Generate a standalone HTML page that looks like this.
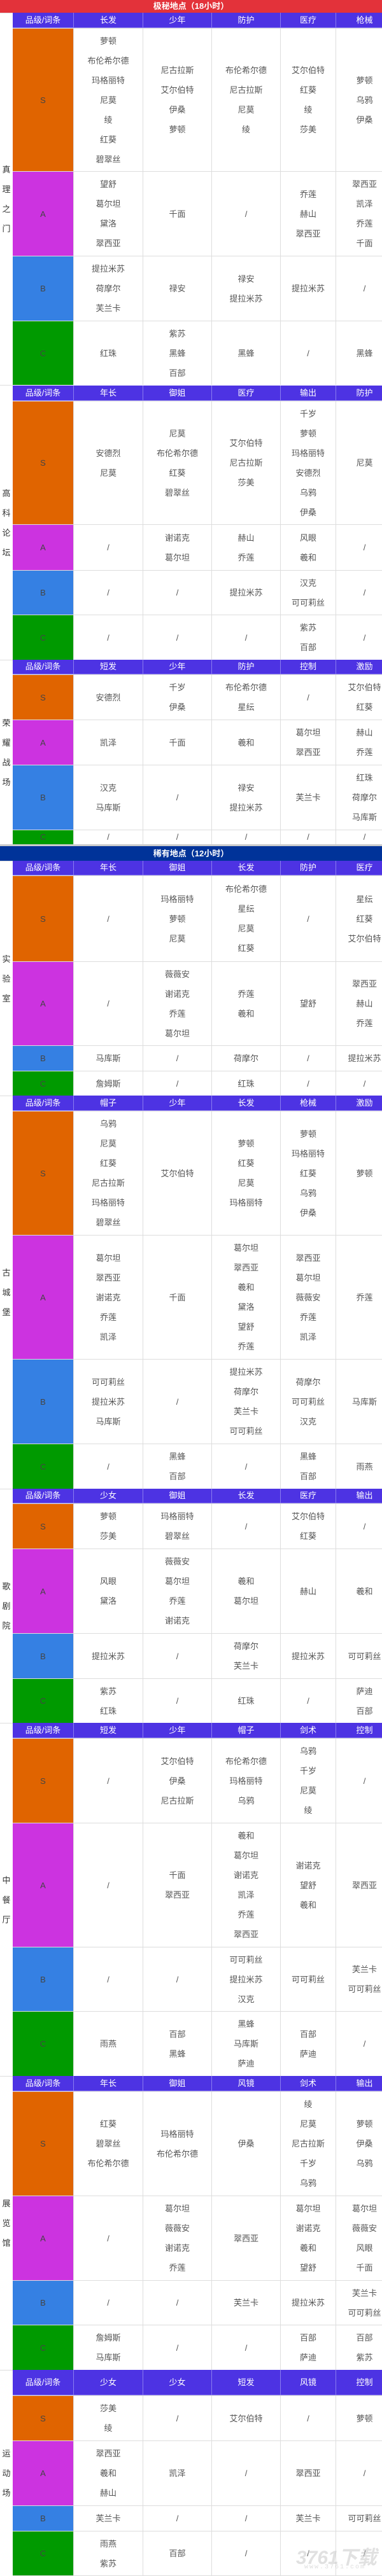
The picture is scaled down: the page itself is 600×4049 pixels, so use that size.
<!DOCTYPE html>
<html><head><meta charset="utf-8">
<style>
*{margin:0;padding:0;box-sizing:border-box}
html,body{width:600px;height:4049px;overflow:hidden;background:#fff}
body{position:relative;font-family:"Liberation Sans","Noto Sans CJK SC",sans-serif;font-size:13px;color:#555}
.r{position:absolute;left:20px;width:597px;display:grid;grid-template-columns:95px 109px 108px 108px 87px 90px;border-top:1px solid #ddd}
.r>*{display:flex;flex-direction:column;justify-content:center;align-items:center;text-align:center;line-height:31px;border-left:1px solid #ddd;white-space:nowrap;overflow:hidden}
.r>i{font-style:normal;color:#444;border-left:none;font-size:13px}
.r>b{font-weight:normal}
.S{background:#e06400}.A{background:#cc33e0}.B{background:#3580e3}.C{background:#009a00}
.h{background:#4d33e3;border-top:none;border-bottom:1px solid #8a7cf0}
.h>*{color:#fff;line-height:20px;border-left:1px solid #8a7cf0;font-size:13px}
.h>*:first-child{border-left:none}
.loc{position:absolute;left:0;width:20px;display:flex;align-items:center;justify-content:center;text-align:center;line-height:31px;color:#333;font-size:13px;border-top:1px solid #ddd}
.t{position:absolute;left:0;width:600px;color:#fff;font-weight:bold;text-align:center;font-size:13px}
</style></head><body>

<div class="t" style="top:0;height:20px;line-height:20px;background:#e3323a">极秘地点（18小时）</div>

<!-- 真理之门 -->
<div class="loc" style="top:20px;height:585px">真<br>理<br>之<br>门</div>
<div class="r h" style="top:20px;height:24px"><span>品级/词条</span><span>长发</span><span>少年</span><span>防护</span><span>医疗</span><span>枪械</span></div>
<div class="r" style="top:44px;height:225px"><i class="S">S</i><b>萝顿<br>布伦希尔德<br>玛格丽特<br>尼莫<br>绫<br>红葵<br>碧翠丝</b><b>尼古拉斯<br>艾尔伯特<br>伊桑<br>萝顿</b><b>布伦希尔德<br>尼古拉斯<br>尼莫<br>绫</b><b>艾尔伯特<br>红葵<br>绫<br>莎美</b><b>萝顿<br>乌鸦<br>伊桑</b></div>
<div class="r" style="top:269px;height:133px"><i class="A">A</i><b>望舒<br>葛尔坦<br>黛洛<br>翠西亚</b><b>千面</b><b>/</b><b>乔莲<br>赫山<br>翠西亚</b><b>翠西亚<br>凯泽<br>乔莲<br>千面</b></div>
<div class="r" style="top:402px;height:102px"><i class="B">B</i><b>提拉米苏<br>荷摩尔<br>芙兰卡</b><b>禄安</b><b>禄安<br>提拉米苏</b><b>提拉米苏</b><b>/</b></div>
<div class="r" style="top:504px;height:101px"><i class="C">C</i><b>红珠</b><b>紫苏<br>黑蜂<br>百部</b><b>黑蜂</b><b>/</b><b>黑蜂</b></div>

<!-- 高科论坛 -->
<div class="loc" style="top:605px;height:432px">高<br>科<br>论<br>坛</div>
<div class="r h" style="top:606px;height:24px"><span>品级/词条</span><span>年长</span><span>御姐</span><span>医疗</span><span>输出</span><span>防护</span></div>
<div class="r" style="top:630px;height:194px"><i class="S">S</i><b>安德烈<br>尼莫</b><b>尼莫<br>布伦希尔德<br>红葵<br>碧翠丝</b><b>艾尔伯特<br>尼古拉斯<br>莎美</b><b>千岁<br>萝顿<br>玛格丽特<br>安德烈<br>乌鸦<br>伊桑</b><b>尼莫</b></div>
<div class="r" style="top:824px;height:72px"><i class="A">A</i><b>/</b><b>谢诺克<br>葛尔坦</b><b>赫山<br>乔莲</b><b>风眼<br>羲和</b><b>/</b></div>
<div class="r" style="top:896px;height:70px"><i class="B">B</i><b>/</b><b>/</b><b>提拉米苏</b><b>汉克<br>可可莉丝</b><b>/</b></div>
<div class="r" style="top:966px;height:71px"><i class="C">C</i><b>/</b><b>/</b><b>/</b><b>紫苏<br>百部</b><b>/</b></div>

<!-- 荣耀战场 -->
<div class="loc" style="top:1037px;height:290px">荣<br>耀<br>战<br>场</div>
<div class="r h" style="top:1037px;height:23px"><span>品级/词条</span><span>短发</span><span>少年</span><span>防护</span><span>控制</span><span>激励</span></div>
<div class="r" style="top:1060px;height:71px"><i class="S">S</i><b>安德烈</b><b>千岁<br>伊桑</b><b>布伦希尔德<br>星纭</b><b>/</b><b>艾尔伯特<br>红葵</b></div>
<div class="r" style="top:1131px;height:71px"><i class="A">A</i><b>凯泽</b><b>千面</b><b>羲和</b><b>葛尔坦<br>翠西亚</b><b>赫山<br>乔莲</b></div>
<div class="r" style="top:1202px;height:102px"><i class="B">B</i><b>汉克<br>马库斯</b><b>/</b><b>禄安<br>提拉米苏</b><b>芙兰卡</b><b>红珠<br>荷摩尔<br>马库斯</b></div>
<div class="r" style="top:1304px;height:23px"><i class="C" style="line-height:22px">C</i><b style="line-height:22px">/</b><b style="line-height:22px">/</b><b style="line-height:22px">/</b><b style="line-height:22px">/</b><b style="line-height:22px">/</b></div>

<div style="position:absolute;left:0;top:1327px;width:600px;height:3px;background:#ccc"></div>
<div class="t" style="top:1330px;height:23px;line-height:23px;background:#003399">稀有地点（12小时）</div>

<!-- 实验室 -->
<div class="loc" style="top:1353px;height:369px">实<br>验<br>室</div>
<div class="r h" style="top:1353px;height:23px"><span>品级/词条</span><span>年长</span><span>御姐</span><span>长发</span><span>防护</span><span>医疗</span></div>
<div class="r" style="top:1376px;height:135px"><i class="S">S</i><b>/</b><b>玛格丽特<br>萝顿<br>尼莫</b><b>布伦希尔德<br>星纭<br>尼莫<br>红葵</b><b>/</b><b>星纭<br>红葵<br>艾尔伯特</b></div>
<div class="r" style="top:1511px;height:132px"><i class="A">A</i><b>/</b><b>薇薇安<br>谢诺克<br>乔莲<br>葛尔坦</b><b>乔莲<br>羲和</b><b>望舒</b><b>翠西亚<br>赫山<br>乔莲</b></div>
<div class="r" style="top:1643px;height:40px"><i class="B">B</i><b>马库斯</b><b>/</b><b>荷摩尔</b><b>/</b><b>提拉米苏</b></div>
<div class="r" style="top:1683px;height:39px"><i class="C">C</i><b>詹姆斯</b><b>/</b><b>红珠</b><b>/</b><b>/</b></div>

<!-- 古城堡 -->
<div class="loc" style="top:1722px;height:618px">古<br>城<br>堡</div>
<div class="r h" style="top:1722px;height:24px"><span>品级/词条</span><span>帽子</span><span>少年</span><span>长发</span><span>枪械</span><span>激励</span></div>
<div class="r" style="top:1746px;height:195px"><i class="S">S</i><b>乌鸦<br>尼莫<br>红葵<br>尼古拉斯<br>玛格丽特<br>碧翠丝</b><b>艾尔伯特</b><b>萝顿<br>红葵<br>尼莫<br>玛格丽特</b><b>萝顿<br>玛格丽特<br>红葵<br>乌鸦<br>伊桑</b><b>萝顿</b></div>
<div class="r" style="top:1941px;height:195px"><i class="A">A</i><b>葛尔坦<br>翠西亚<br>谢诺克<br>乔莲<br>凯泽</b><b>千面</b><b>葛尔坦<br>翠西亚<br>羲和<br>黛洛<br>望舒<br>乔莲</b><b>翠西亚<br>葛尔坦<br>薇薇安<br>乔莲<br>凯泽</b><b>乔莲</b></div>
<div class="r" style="top:2136px;height:133px"><i class="B">B</i><b>可可莉丝<br>提拉米苏<br>马库斯</b><b>/</b><b>提拉米苏<br>荷摩尔<br>芙兰卡<br>可可莉丝</b><b>荷摩尔<br>可可莉丝<br>汉克</b><b>马库斯</b></div>
<div class="r" style="top:2269px;height:71px"><i class="C">C</i><b>/</b><b>黑蜂<br>百部</b><b>/</b><b>黑蜂<br>百部</b><b>雨燕</b></div>

<!-- 歌剧院 -->
<div class="loc" style="top:2340px;height:368px">歌<br>剧<br>院</div>
<div class="r h" style="top:2340px;height:23px"><span>品级/词条</span><span>少女</span><span>御姐</span><span>长发</span><span>医疗</span><span>输出</span></div>
<div class="r" style="top:2363px;height:71px"><i class="S">S</i><b>萝顿<br>莎美</b><b>玛格丽特<br>碧翠丝</b><b>/</b><b>艾尔伯特<br>红葵</b><b>/</b></div>
<div class="r" style="top:2434px;height:133px"><i class="A">A</i><b>风眼<br>黛洛</b><b>薇薇安<br>葛尔坦<br>乔莲<br>谢诺克</b><b>羲和<br>葛尔坦</b><b>赫山</b><b>羲和</b></div>
<div class="r" style="top:2567px;height:71px"><i class="B">B</i><b>提拉米苏</b><b>/</b><b>荷摩尔<br>芙兰卡</b><b>提拉米苏</b><b>可可莉丝</b></div>
<div class="r" style="top:2638px;height:70px"><i class="C">C</i><b>紫苏<br>红珠</b><b>/</b><b>红珠</b><b>/</b><b>萨迪<br>百部</b></div>

<!-- 中餐厅 -->
<div class="loc" style="top:2708px;height:555px">中<br>餐<br>厅</div>
<div class="r h" style="top:2708px;height:24px"><span>品级/词条</span><span>短发</span><span>少年</span><span>帽子</span><span>剑术</span><span>控制</span></div>
<div class="r" style="top:2732px;height:133px"><i class="S">S</i><b>/</b><b>艾尔伯特<br>伊桑<br>尼古拉斯</b><b>布伦希尔德<br>玛格丽特<br>乌鸦</b><b>乌鸦<br>千岁<br>尼莫<br>绫</b><b>/</b></div>
<div class="r" style="top:2865px;height:195px"><i class="A">A</i><b>/</b><b>千面<br>翠西亚</b><b>羲和<br>葛尔坦<br>谢诺克<br>凯泽<br>乔莲<br>翠西亚</b><b>谢诺克<br>望舒<br>羲和</b><b>翠西亚</b></div>
<div class="r" style="top:3060px;height:101px"><i class="B">B</i><b>/</b><b>/</b><b>可可莉丝<br>提拉米苏<br>汉克</b><b>可可莉丝</b><b>芙兰卡<br>可可莉丝</b></div>
<div class="r" style="top:3161px;height:102px"><i class="C">C</i><b>雨燕</b><b>百部<br>黑蜂</b><b>黑蜂<br>马库斯<br>萨迪</b><b>百部<br>萨迪</b><b>/</b></div>

<!-- 展览馆 -->
<div class="loc" style="top:3263px;height:462px">展<br>览<br>馆</div>
<div class="r h" style="top:3263px;height:24px"><span>品级/词条</span><span>年长</span><span>御姐</span><span>风镜</span><span>剑术</span><span>输出</span></div>
<div class="r" style="top:3287px;height:164px"><i class="S">S</i><b>红葵<br>碧翠丝<br>布伦希尔德</b><b>玛格丽特<br>布伦希尔德</b><b>伊桑</b><b>绫<br>尼莫<br>尼古拉斯<br>千岁<br>乌鸦</b><b>萝顿<br>伊桑<br>乌鸦</b></div>
<div class="r" style="top:3451px;height:133px"><i class="A">A</i><b>/</b><b>葛尔坦<br>薇薇安<br>谢诺克<br>乔莲</b><b>翠西亚</b><b>葛尔坦<br>谢诺克<br>羲和<br>望舒</b><b>葛尔坦<br>薇薇安<br>风眼<br>千面</b></div>
<div class="r" style="top:3584px;height:70px"><i class="B">B</i><b>/</b><b>/</b><b>芙兰卡</b><b>提拉米苏</b><b>芙兰卡<br>可可莉丝</b></div>
<div class="r" style="top:3654px;height:71px"><i class="C">C</i><b>詹姆斯<br>马库斯</b><b>/</b><b>/</b><b>百部<br>萨迪</b><b>百部<br>紫苏</b></div>

<!-- 运动场 -->
<div class="loc" style="top:3725px;height:323px">运<br>动<br>场</div>
<div class="r h" style="top:3725px;height:40px"><span>品级/词条</span><span>少女</span><span>少女</span><span>短发</span><span>风镜</span><span>控制</span></div>
<div class="r" style="top:3765px;height:71px"><i class="S">S</i><b>莎美<br>绫</b><b>/</b><b>艾尔伯特</b><b>/</b><b>萝顿</b></div>
<div class="r" style="top:3836px;height:102px"><i class="A">A</i><b>翠西亚<br>羲和<br>赫山</b><b>凯泽</b><b>/</b><b>翠西亚</b><b>/</b></div>
<div class="r" style="top:3938px;height:40px"><i class="B">B</i><b>芙兰卡</b><b>/</b><b>/</b><b>芙兰卡</b><b>可可莉丝</b></div>
<div class="r" style="top:3978px;height:71px;border-bottom:1px solid #ddd"><i class="C">C</i><b>雨燕<br>紫苏</b><b>百部</b><b>/</b><b>/</b><b>/</b></div>

<div style="position:absolute;left:465px;top:3995px;font-size:30px;font-weight:bold;font-style:italic;color:rgba(200,200,200,0.55)">3761下载</div>
<div style="position:absolute;left:478px;top:4030px;font-size:10px;letter-spacing:2px;color:rgba(200,200,200,0.6);font-family:'Liberation Mono',monospace">www.3761.com</div>
</body></html>
